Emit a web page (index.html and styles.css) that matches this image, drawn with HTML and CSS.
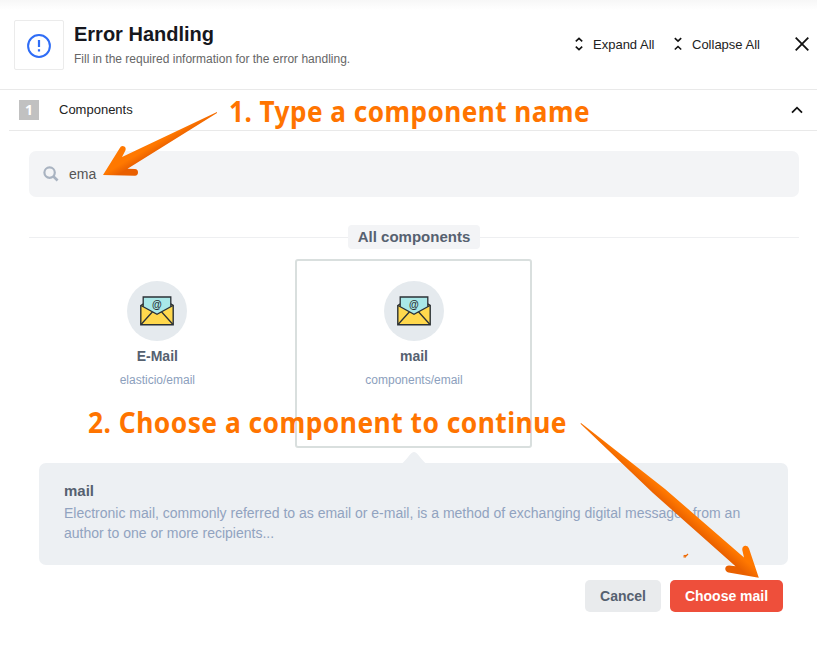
FILE: index.html
```html
<!DOCTYPE html>
<html lang="en">
<head>
<meta charset="utf-8">
<title>Error Handling</title>
<link rel="stylesheet" href="styles.css">
</head>
<body>
<header class="header">
  <div class="header-icon">
    <svg width="24" height="24" viewBox="0 0 24 24" fill="none" stroke="#2f6df6" stroke-width="2"><circle cx="12" cy="12" r="10.9"/><path d="M12 6v7M12 15.2v2.3" stroke-width="2.2"/></svg>
  </div>
  <div class="header-text">
    <h1>Error Handling</h1>
    <p>Fill in the required information for the error handling.</p>
  </div>
  <div class="actions">
    <svg width="8" height="14" viewBox="0 0 8 14"><path d="m.8 4.3 3.2-3 3.2 3M.8 9.7l3.2 3 3.2-3"/></svg>
    <span class="expand">Expand All</span>
    <svg width="8" height="14" viewBox="0 0 8 14"><path d="m.8 1.2 3.2 3 3.2-3M.8 12.5l3.2-3 3.2 3"/></svg>
    <span class="collapse">Collapse All</span>
    <svg class="close" width="14" height="14" viewBox="0 0 14 14"><path d="m.7.7 12.6 12.6M13.3.7.7 13.3"/></svg>
  </div>
</header>
<section class="step">
  <span class="step-number">1</span>
  <span class="step-title">Components</span>
  <svg width="12" height="8" viewBox="0 0 12 8"><path d="m1 6.7 5-5 5 5"/></svg>
</section>
<main>
  <div class="search">
    <svg width="16" height="16" viewBox="0 0 16 16" fill="none" stroke="#a9b3c1" stroke-width="2.2"><circle cx="6.6" cy="6.6" r="5.2"/><path d="m10.2 10.2 4.4 4.3" stroke-width="2.6"/></svg>
    <span>ema</span>
  </div>
  <div class="divider"><span>All components</span></div>
  <div class="grid">
    <div class="card">
      <div class="avatar">
        <svg class="mail-icon" width="34" height="30" viewBox="0 0 34 30">
          <path class="envelope" d="M.8 9.5 4 7.500h26l3.200 2v19.200H.8z"/>
          <path class="letter" d="M3.200 1h27.600v10.300L17 18.300 3.200 11.300z"/>
          <path class="line" d="M3.200 10.500V1h27.600v9.500M1 9.500 17 18.300l16-8.800M1 28.500 12.300 16M33 28.500 21.700 16"/>
          <text x="17" y="12.300">@</text>
        </svg>
      </div>
      <strong>E-Mail</strong>
      <small>elasticio/email</small>
    </div>
    <div class="card selected">
      <div class="avatar">
        <svg class="mail-icon" width="34" height="30" viewBox="0 0 34 30">
          <path class="envelope" d="M.8 9.5 4 7.500h26l3.200 2v19.200H.8z"/>
          <path class="letter" d="M3.200 1h27.600v10.300L17 18.300 3.200 11.300z"/>
          <path class="line" d="M3.200 10.500V1h27.600v9.500M1 9.500 17 18.300l16-8.800M1 28.500 12.300 16M33 28.500 21.700 16"/>
          <text x="17" y="12.300">@</text>
        </svg>
      </div>
      <strong>mail</strong>
      <small>components/email</small>
    </div>
  </div>
  <div class="details">
    <svg class="pointer" width="26" height="12" viewBox="0 0 26 12"><path d="M0 12C3 11 9 2 11 .8q2-1.4 4 0C17 2 23 11 26 12z" fill="#edf0f3"/></svg>
    <h2>mail</h2>
    <p>Electronic mail, commonly referred to as email or e-mail, is a method of exchanging digital messages from an<br>author to one or more recipients...</p>
  </div>
  <div class="buttons">
    <button class="cancel">Cancel</button>
    <button class="choose">Choose mail</button>
  </div>
</main>
<svg class="annotations" width="817" height="666" viewBox="0 0 817 666">
  <defs>
    <linearGradient id="first-arrow" gradientUnits="userSpaceOnUse" x1="155" y1="136" x2="165" y2="153"><stop offset=".35" stop-color="#ff7800"/><stop offset=".75" stop-color="#e95f00"/></linearGradient>
    <linearGradient id="second-arrow" gradientUnits="userSpaceOnUse" x1="682" y1="500" x2="670" y2="514"><stop offset=".25" stop-color="#ff7800"/><stop offset=".8" stop-color="#e96000"/></linearGradient>
  </defs>
  <text x="229" y="122" textLength="361" lengthAdjust="spacingAndGlyphs">1. Type a component name</text>
  <text x="88" y="433" textLength="479" lengthAdjust="spacingAndGlyphs">2. Choose a component to continue</text>
  <path fill="url(#first-arrow)" d="M217 112 122 157 125.400 150.500Q126.500 147 123.500 146.200 121 145.600 119.500 148.500L103 175 135 175.700Q138 175.500 138 172.500 138 169.300 135 169.100L127.500 168.700 217 113Z"/>
  <path fill="url(#second-arrow)" d="M581 423 665 489 744 557.500 742.300 550Q742 546.500 745 545.700 748 545.200 749 548.500L758.800 577.800 728.500 572.600Q725 571.500 725.300 568.300 726 565.200 729.500 565.600L735.500 566.300 653 493 580.500 423.800Z"/>
  <path class="mark" d="m683.500 556 1.500-.5 1 .5 2-2M683.500 557h2.500"/>
</svg>
</body>
</html>
```
FILE: styles.css
```css
* { box-sizing: border-box; }
body {
  margin: 0;
  height: 666px;
  overflow: hidden;
  position: relative;
  background: #fff;
  font-family: "Liberation Sans", Arial, sans-serif;
}
h1, h2, p { margin: 0; }
.header {
  height: 90px;
  display: flex;
  align-items: flex-start;
  padding: 20px 8px 0 14px;
  border-bottom: 1px solid #e9e9e9;
  background: linear-gradient(#f7f7f7, #fff 10px);
}
.header-icon {
  width: 50px;
  height: 50px;
  display: grid;
  place-items: center;
  padding-top: 1px;
  border: 1px solid #ebebeb;
  border-radius: 2px;
  background: #fff;
}
.header-text { margin-left: 10px; }
h1 { font-size: 20px; line-height: 28px; color: #16171d; }
.header-text p { font-size: 12px; line-height: 14px; margin-top: 4px; color: #666; white-space: nowrap; }
.actions {
  margin-left: auto;
  height: 48px;
  display: flex;
  align-items: center;
  font-size: 13px;
  color: #222;
  white-space: nowrap;
}
.actions svg, .step svg { fill: none; stroke: #111; stroke-width: 1.6; }
.expand { width: 62px; margin: 0 19px 0 10px; }
.collapse { width: 68px; margin-left: 10px; }
.actions .close { margin-left: 35px; stroke-width: 1.8; }
.step {
  height: 41px;
  margin-left: 9px;
  padding: 0 14px 0 10px;
  display: flex;
  align-items: center;
  border-bottom: 1px solid #e9e9e9;
}
.step-number {
  width: 20px;
  height: 20px;
  text-align: center;
  background: #c1c1c1;
  color: #fff;
  font: bold 14px/19px "Open Sans", sans-serif;
}
.step-title { margin: -2px 0 0 20px; font-size: 13px; color: #222; }
.step svg { margin-left: auto; stroke-width: 1.8; }
main { padding: 20px 18px 0 29px; }
.search {
  height: 46px;
  display: flex;
  align-items: center;
  gap: 10px;
  padding-left: 14px;
  border-radius: 7px;
  background: #f3f4f6;
  font-size: 14px;
  color: #555;
}
.divider {
  height: 24px;
  margin-top: 28px;
  display: flex;
  align-items: center;
}
.divider::before, .divider::after { content: ""; flex: 1; height: 1px; margin-top: 1px; background: #eeeff1; }
.divider span {
  width: 132px;
  text-align: center;
  font-weight: bold;
  font-size: 15px;
  line-height: 24px;
  border-radius: 4px;
  color: #566170;
  background: #f3f4f6;
}
.grid { display: grid; grid-template-columns: repeat(3, 1fr); margin-top: 10px; }
.card {
  width: 237px;
  height: 189px;
  justify-self: center;
  display: flex;
  flex-direction: column;
  align-items: center;
  padding-top: 20px;
  border: 2px solid transparent;
  border-radius: 3px;
}
.selected { border-color: #d9dfde; }
.avatar {
  width: 60px;
  height: 60px;
  border-radius: 50%;
  display: grid;
  place-items: center;
  background: #e5eaee;
}
.envelope { fill: #ffd84d; stroke: #2b3136; stroke-width: 1.4; }
.letter { fill: #a9e8e8; }
.line { fill: none; stroke: #2b3136; stroke-width: 1.3; }
.mail-icon text { font: bold 10px "Liberation Sans", sans-serif; text-anchor: middle; fill: #2b3136; }
.card strong { margin-top: 7px; font-size: 14px; line-height: 16px; color: #566170; }
.card small { margin-top: 9px; font-size: 12px; line-height: 14px; color: #8ca0bd; }
.details {
  position: relative;
  height: 102px;
  margin: 15px 11px 0 10px;
  padding: 19px 25px 0;
  border-radius: 7px;
  background: #edf0f3;
}
.pointer { position: absolute; top: -11px; left: 362px; }
h2 { font-size: 15px; line-height: 18px; color: #566170; }
.details p { margin-top: 3px; font-size: 14px; line-height: 20px; color: #91a3c0; white-space: nowrap; }
.buttons { display: flex; justify-content: flex-end; gap: 9px; margin: 15px 16px 0 0; }
button {
  height: 32px;
  padding: 0;
  border: 0;
  border-radius: 5px;
  font: bold 14px "Liberation Sans", Arial, sans-serif;
}
.cancel { width: 76px; color: #566170; background: #e9ebed; }
.choose { width: 113px; color: #fff; background: #ee4f3b; }
.annotations { position: absolute; left: 0; top: 0; pointer-events: none; }
.annotations text { font: bold 28px "Noto Sans", sans-serif; letter-spacing: .5px; fill: #ff7400; }
.mark { fill: none; stroke: #ee6800; stroke-width: 1.2; }
```
